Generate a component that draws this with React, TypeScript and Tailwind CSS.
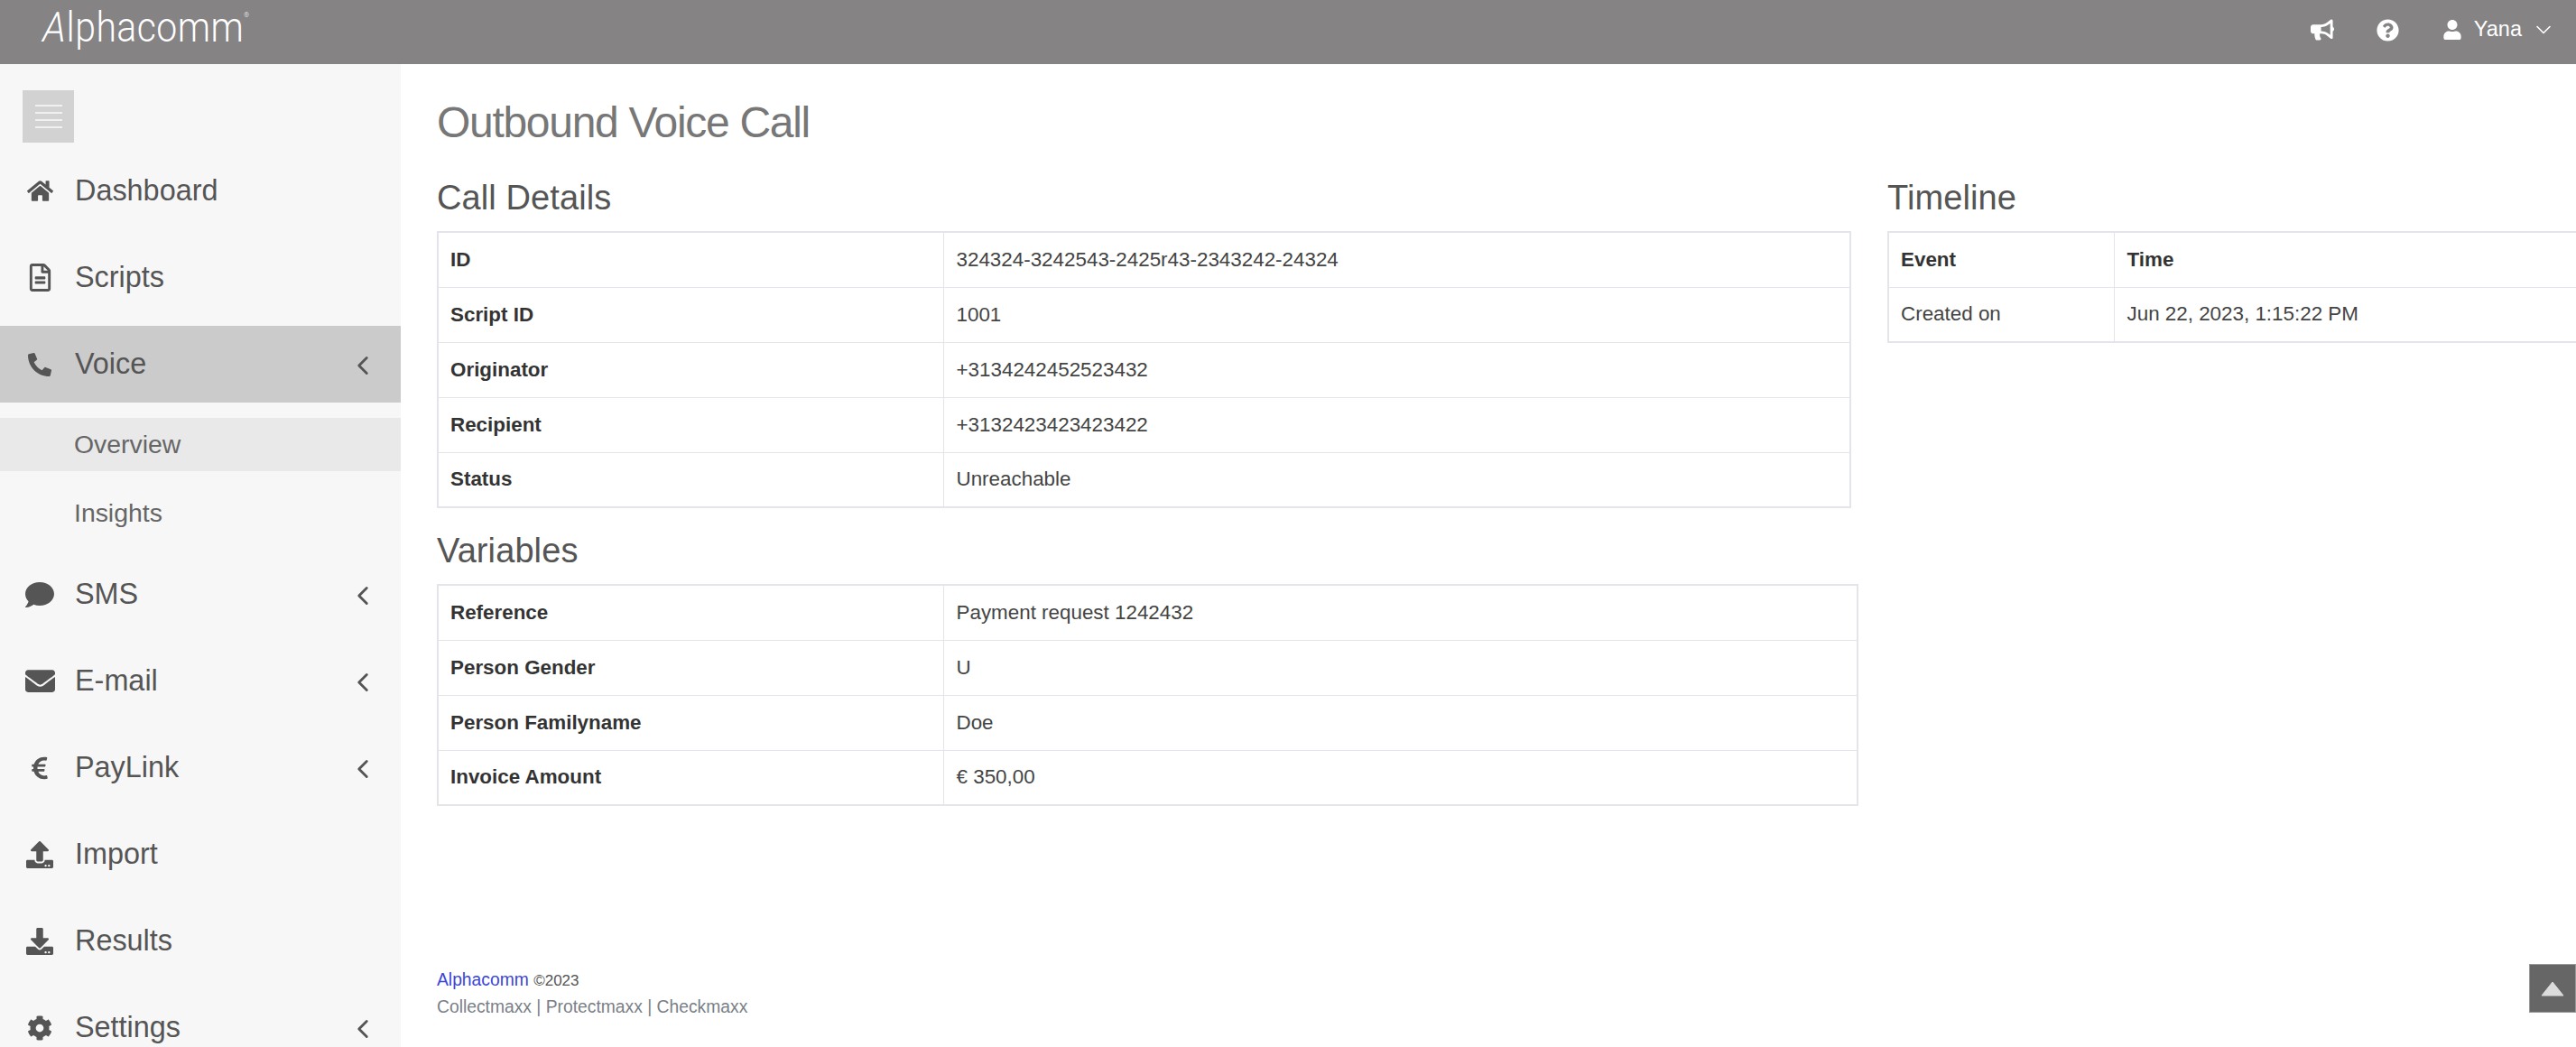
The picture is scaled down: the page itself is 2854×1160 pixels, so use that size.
import React from "react";
import {
  FaHome,
  FaRegFileAlt,
  FaPhoneAlt,
  FaComment,
  FaEnvelope,
  FaEuroSign,
  FaUpload,
  FaDownload,
  FaCog,
  FaBullhorn,
  FaQuestionCircle,
  FaUser,
} from "react-icons/fa";
import { ChevronDown, ChevronLeft } from "lucide-react";

const FONT = "font-['Liberation_Sans',Arial,sans-serif]";

const topNav = [
  { title: "Dashboard", icon: <FaHome size={29} /> },
  { title: "Scripts", icon: <FaRegFileAlt size={31} /> },
];

const bottomNav = [
  { title: "SMS", icon: <FaComment size={32} />, hasMenu: true },
  { title: "E-mail", icon: <FaEnvelope size={33} />, hasMenu: true },
  { title: "PayLink", icon: <FaEuroSign size={28} />, hasMenu: true },
  { title: "Import", icon: <FaUpload size={30} /> },
  { title: "Results", icon: <FaDownload size={30} /> },
  { title: "Settings", icon: <FaCog size={28} />, hasMenu: true },
];

const callDetails = [
  ["ID", "324324-3242543-2425r43-2343242-24324"],
  ["Script ID", "1001"],
  ["Originator", "+3134242452523432"],
  ["Recipient", "+3132423423423422"],
  ["Status", "Unreachable"],
];

const variables = [
  ["Reference", "Payment request 1242432"],
  ["Person Gender", "U"],
  ["Person Familyname", "Doe"],
  ["Invoice Amount", "€ 350,00"],
];

const NavItem = ({ title, icon, hasMenu = false, active = false }) => (
  <a
    className={`flex h-[85px] shrink-0 items-center pl-[26px] pr-[25px] text-[32.4px] text-[#555] ${
      active ? "bg-[#cbcbcb]" : ""
    }`}
  >
    <span className="flex w-[36px] justify-center text-[#555]">{icon}</span>
    <span className="ml-[21px]">{title}</span>
    {hasMenu && (
      <ChevronLeft className="ml-auto mt-[2px] text-[#555]" size={34} strokeWidth={2} />
    )}
  </a>
);

const SubItem = ({ title, active = false }) => (
  <a
    className={`flex h-[59px] items-center pl-[82px] text-[28.4px] text-[#666] ${
      active ? "bg-[#e9e9e9]" : ""
    }`}
  >
    {title}
  </a>
);

const DataTable = ({ rows, width }) => (
  <table
    className={`${width} table-fixed border-collapse border-2 border-[#e4e5eb] text-[22.4px] text-[#444]`}
  >
    <tbody>
      {rows.map(([label, value]) => (
        <tr key={label} className="h-[61px]">
          <th className="w-[560px] border border-[#e4e5eb] pl-[13px] text-left font-bold text-[#333]">
            {label}
          </th>
          <td className="border border-[#e4e5eb] px-[14px]">{value}</td>
        </tr>
      ))}
    </tbody>
  </table>
);

const App = () => {
  return (
    <div className={`relative flex h-screen flex-col overflow-hidden bg-white ${FONT}`}>
      <header className="flex h-[71px] shrink-0 items-center bg-[#858384] text-white">
        <div className="ml-[48px] mb-[12px] flex origin-left scale-x-[0.89] items-start font-['Roboto',sans-serif] text-[46px] leading-none font-light">
          <span className="inline-block -skew-x-12">A</span>
          <span className="tracking-[0.5px]">lphacomm</span>
          <span className="mt-[6px] text-[8px]">®</span>
        </div>
        <div className="ml-auto mb-[5px] flex items-center">
          <FaBullhorn size={26} />
          <FaQuestionCircle size={25} className="ml-[47px]" />
          <FaUser size={22} className="ml-[48px]" />
          <span className="ml-[13px] text-[23.5px]">Yana</span>
          <ChevronDown size={28} strokeWidth={1.4} className="ml-[10px] mr-[22px]" />
        </div>
      </header>

      <div className="flex min-h-0 flex-1">
        <aside className="flex w-[444px] shrink-0 flex-col bg-[#f7f7f7] pt-[29px]">
          <button className="ml-[25px] flex h-[58px] w-[57px] shrink-0 flex-col items-center justify-center gap-[6px] bg-[#d2d2d2]">
            <span className="h-[2px] w-[30px] bg-[#f0f0f0]" />
            <span className="h-[2px] w-[30px] bg-[#f0f0f0]" />
            <span className="h-[2px] w-[30px] bg-[#f0f0f0]" />
            <span className="h-[2px] w-[30px] bg-[#f0f0f0]" />
          </button>
          <nav className="mt-[11px] flex flex-col gap-[11px]">
            {topNav.map((item) => (
              <NavItem key={item.title} {...item} />
            ))}
            <NavItem title="Voice" icon={<FaPhoneAlt size={26} />} hasMenu active />
            <div className="mt-[6px] mb-[7px] flex flex-col gap-[17px]">
              <SubItem title="Overview" active />
              <SubItem title="Insights" />
            </div>
            {bottomNav.map((item) => (
              <NavItem key={item.title} {...item} />
            ))}
          </nav>
        </aside>

        <main className="flex min-w-0 flex-1 flex-col overflow-hidden pl-[40px] pt-[34px]">
          <h1 className="text-[48px] leading-[62px] tracking-[-1.3px] text-[#777]">
            Outbound Voice Call
          </h1>
          <div className="mt-[29px] flex">
            <div className="w-[1575px] shrink-0">
              <h2 className="mb-[14px] text-[38px] leading-[46px] tracking-[0.1px] text-[#555]">
                Call Details
              </h2>
              <DataTable rows={callDetails} width="w-[1567px]" />
              <h2 className="mt-[24px] mb-[14px] text-[38px] leading-[46px] tracking-[0.1px] text-[#555]">
                Variables
              </h2>
              <DataTable rows={variables} width="w-[1575px]" />
            </div>
            <div className="ml-[32px] w-[780px] shrink-0">
              <h2 className="mb-[14px] text-[38px] leading-[46px] tracking-[0.1px] text-[#555]">
                Timeline
              </h2>
              <table className="w-[780px] table-fixed border-collapse border-2 border-[#e4e5eb] text-[22.4px] text-[#444]">
                <tbody>
                  <tr className="h-[61px]">
                    <th className="w-[250px] border border-[#e4e5eb] pl-[13px] text-left font-bold text-[#333]">
                      Event
                    </th>
                    <th className="border border-[#e4e5eb] px-[14px] text-left font-bold text-[#333]">
                      Time
                    </th>
                  </tr>
                  <tr className="h-[61px]">
                    <td className="border border-[#e4e5eb] pl-[13px]">Created on</td>
                    <td className="border border-[#e4e5eb] px-[14px]">
                      Jun 22, 2023, 1:15:22 PM
                    </td>
                  </tr>
                </tbody>
              </table>
            </div>
          </div>
          <footer className="mt-[178px] text-[19.3px] leading-[29px]">
            <div className="text-[#555]">
              <a className="text-[#3b46d9]">Alphacomm</a>{" "}
              <span className="text-[17px]">©2023</span>
            </div>
            <div className="text-[#7a7f87]">Collectmaxx | Protectmaxx | Checkmaxx</div>
          </footer>
        </main>
      </div>

      <button className="absolute right-0 top-[1068px] flex h-[54px] w-[52px] items-center justify-center border border-[#999] bg-[#666]">
        <svg width="26" height="17" viewBox="0 0 26 17">
          <path d="M13 1 L25 16 L1 16 Z" fill="#dcdcdc" stroke="#dcdcdc" strokeLinejoin="round" />
        </svg>
      </button>
    </div>
  );
};

export default App;
